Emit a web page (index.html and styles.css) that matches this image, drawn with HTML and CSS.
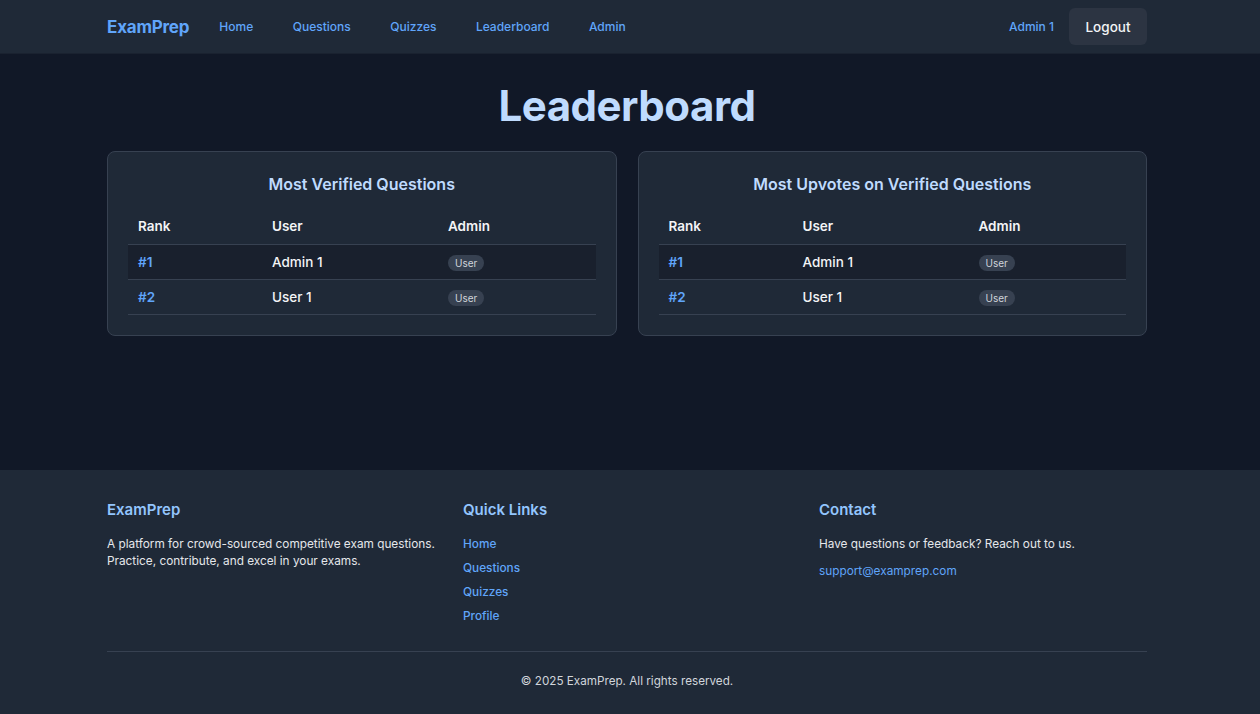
FILE: index.html
```html
<!DOCTYPE html>
<html lang="en">
<head>
<meta charset="utf-8">
<title>Leaderboard - ExamPrep</title>
<link rel="stylesheet" href="styles.css">
</head>
<body>
<div class="page">
  <header class="nav">
    <div class="container nav-inner">
      <div class="nav-left">
        <a class="logo" href="#">ExamPrep</a>
        <nav class="nav-links">
          <a href="#">Home</a>
          <a href="#">Questions</a>
          <a href="#">Quizzes</a>
          <a href="#">Leaderboard</a>
          <a href="#">Admin</a>
        </nav>
      </div>
      <div class="nav-right">
        <a class="nav-user" href="#">Admin 1</a>
        <button class="logout">Logout</button>
      </div>
    </div>
  </header>

  <main class="main">
    <div class="container">
      <h1 class="page-title">Leaderboard</h1>
      <div class="boards">
        <section class="card">
          <h2 class="card-title">Most Verified Questions</h2>
          <table class="table">
            <thead>
              <tr><th class="c-rank">Rank</th><th class="c-user">User</th><th>Admin</th></tr>
            </thead>
            <tbody>
              <tr class="odd"><td class="rank">#1</td><td class="name">Admin 1</td><td><span class="badge">User</span></td></tr>
              <tr><td class="rank">#2</td><td class="name">User 1</td><td><span class="badge">User</span></td></tr>
            </tbody>
          </table>
        </section>
        <section class="card">
          <h2 class="card-title">Most Upvotes on Verified Questions</h2>
          <table class="table">
            <thead>
              <tr><th class="c-rank">Rank</th><th class="c-user">User</th><th>Admin</th></tr>
            </thead>
            <tbody>
              <tr class="odd"><td class="rank">#1</td><td class="name">Admin 1</td><td><span class="badge">User</span></td></tr>
              <tr><td class="rank">#2</td><td class="name">User 1</td><td><span class="badge">User</span></td></tr>
            </tbody>
          </table>
        </section>
      </div>
    </div>
  </main>

  <footer class="footer">
    <div class="container">
      <div class="footer-cols">
        <div class="fcol">
          <h3 class="fhead">ExamPrep</h3>
          <p class="ftext">A platform for crowd-sourced competitive exam questions. Practice, contribute, and excel in your exams.</p>
        </div>
        <div class="fcol">
          <h3 class="fhead">Quick Links</h3>
          <ul class="flinks">
            <li><a href="#">Home</a></li>
            <li><a href="#">Questions</a></li>
            <li><a href="#">Quizzes</a></li>
            <li><a href="#">Profile</a></li>
          </ul>
        </div>
        <div class="fcol">
          <h3 class="fhead">Contact</h3>
          <p class="ftext">Have questions or feedback? Reach out to us.</p>
          <a class="femail" href="#">support@examprep.com</a>
        </div>
      </div>
      <div class="copyright">© 2025 ExamPrep. All rights reserved.</div>
    </div>
  </footer>
</div>
</body>
</html>
```

FILE: styles.css
```css
* { box-sizing: border-box; }
html, body { margin: 0; padding: 0; }
body {
  font-family: Inter, "Noto Sans", "Liberation Sans", sans-serif;
  background: #111827;
  color: #f3f4f6;
}
a { text-decoration: none; }

.container {
  width: 1040px;
  margin-left: calc(50% - 523px);
}

/* Nav */
.nav {
  background: #1f2937;
  height: 54px;
  border-bottom: 1px solid #1a2230;
}
.nav-inner {
  height: 53px;
  display: flex;
  align-items: center;
  justify-content: space-between;
}
.nav-left {
  display: flex;
  align-items: center;
  gap: 30px;
}
.logo {
  color: #60a5fa;
  font-size: 17px;
  font-weight: 700;
  letter-spacing: -0.2px;
}
.nav-links {
  display: flex;
  gap: 39.5px;
}
.nav-links a {
  color: #60a5fa;
  font-size: 12px;
  font-weight: 500;
}
.nav-right {
  display: flex;
  align-items: center;
  gap: 15px;
}
.nav-user {
  color: #60a5fa;
  font-size: 12px;
  font-weight: 500;
}
.logout {
  font-family: inherit;
  background: #2c3442;
  color: #f3f4f6;
  border: none;
  border-radius: 6px;
  width: 78px;
  height: 37px;
  font-size: 13.5px;
  font-weight: 500;
}

/* Main */
.main {
  padding: 28px 0 134px;
}
.page-title {
  margin: 0;
  text-align: center;
  font-size: 42px;
  line-height: 48px;
  font-weight: 700;
  color: #bfdbfe;
  letter-spacing: -0.5px;
}
.boards {
  margin-top: 21px;
  display: grid;
  grid-template-columns: 1fr 1fr;
  gap: 21px;
}
.card {
  background: #1f2937;
  border: 1px solid #374151;
  border-radius: 8px;
  padding: 20px;
}
.card-title {
  margin: 0 0 12px;
  text-align: center;
  font-size: 16px;
  line-height: 24px;
  font-weight: 600;
  color: #bfdbfe;
}
.table {
  width: 100%;
  border-collapse: collapse;
  font-size: 13.5px;
}
.table th {
  text-align: left;
  font-weight: 600;
  color: #f3f4f6;
  padding: 8px 10px;
  line-height: 20px;
  border-bottom: 1px solid #374151;
}
.c-rank { width: 134px; }
.c-user { width: 176px; }
.table td {
  padding: 7px 10px;
  line-height: 20px;
  border-bottom: 1px solid #374151;
}
.table tr.odd td { background: #19202d; }
.rank {
  color: #60a5fa;
  font-weight: 600;
}
.name {
  color: #f3f4f6;
  font-weight: 500;
}
.badge {
  display: inline-block;
  background: #374151;
  color: #d1d5db;
  font-size: 10px;
  line-height: 16px;
  padding: 0 7px;
  border-radius: 9999px;
  vertical-align: middle;
}

/* Footer */
.footer {
  background: #1f2937;
  padding: 31px 0 24px;
}
.footer-cols {
  display: grid;
  grid-template-columns: 1fr 1fr 1fr;
  gap: 28px;
  padding-bottom: 26px;
  border-bottom: 1px solid #374151;
}
.fhead {
  margin: 0 0 17px;
  font-size: 15px;
  line-height: 18px;
  font-weight: 600;
  color: #93c5fd;
}
.ftext {
  margin: 0;
  font-size: 11.8px;
  line-height: 17px;
  color: #e5e7eb;
}
.flinks {
  list-style: none;
  margin: 0;
  padding: 0;
  display: flex;
  flex-direction: column;
  gap: 7px;
}
.flinks li {
  font-size: 11.8px;
  line-height: 17px;
}
.flinks a, .femail {
  color: #60a5fa;
  font-size: 11.8px;
  line-height: 17px;
  font-weight: 500;
}
.femail {
  display: inline-block;
  margin-top: 10px;
  font-weight: 400;
}
.copyright {
  text-align: center;
  font-size: 11.7px;
  line-height: 17px;
  color: #d1d5db;
  padding-top: 21px;
}
```
